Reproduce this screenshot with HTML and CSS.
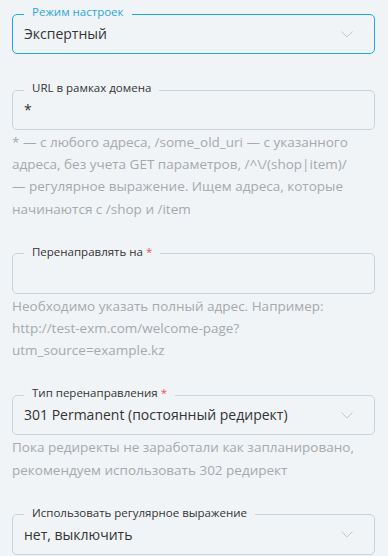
FILE: index.html
```html
<!DOCTYPE html>
<html lang="ru">
<head>
    <meta charset="UTF-8">
    <title>Редирект</title>
    <link rel="stylesheet" href="styles.css">
</head>
<body>
    <form class="redirect-form">
        <div class="group">
            <fieldset class="field field-active">
                <legend>Режим настроек</legend>
                <div class="select-row">
                    <span class="value">Экспертный</span>
                    <svg class="chevron" width="12" height="7" viewBox="0 0 12 7"><polyline points="0.5,0.5 6,6 11.5,0.5" fill="none" stroke="#c2c7cc" stroke-width="1"/></svg>
                </div>
            </fieldset>
        </div>

        <div class="group">
            <fieldset class="field">
                <legend>URL в рамках домена</legend>
                <div class="select-row">
                    <span class="value">*</span>
                </div>
            </fieldset>
            <p class="hint">* — с любого адреса, /some_old_uri — с указанного адреса, без учета GET параметров, /^\/(shop|item)/ — регулярное выражение. Ищем адреса, которые начинаются с /shop и /item</p>
        </div>

        <div class="group">
            <fieldset class="field">
                <legend>Перенаправлять на <span class="req">*</span></legend>
                <div class="select-row">
                    <span class="value"></span>
                </div>
            </fieldset>
            <p class="hint">Необходимо указать полный адрес. Например: http://test-exm.com/welcome-page?utm_source=example.kz</p>
        </div>

        <div class="group">
            <fieldset class="field">
                <legend>Тип перенаправления <span class="req">*</span></legend>
                <div class="select-row">
                    <span class="value">301 Permanent (постоянный редирект)</span>
                    <svg class="chevron" width="12" height="7" viewBox="0 0 12 7"><polyline points="0.5,0.5 6,6 11.5,0.5" fill="none" stroke="#c2c7cc" stroke-width="1"/></svg>
                </div>
            </fieldset>
            <p class="hint">Пока редиректы не заработали как запланировано, рекомендуем использовать 302 редирект</p>
        </div>

        <div class="group">
            <fieldset class="field">
                <legend>Использовать регулярное выражение</legend>
                <div class="select-row">
                    <span class="value">нет, выключить</span>
                    <svg class="chevron" width="12" height="7" viewBox="0 0 12 7"><polyline points="0.5,0.5 6,6 11.5,0.5" fill="none" stroke="#c2c7cc" stroke-width="1"/></svg>
                </div>
            </fieldset>
        </div>
    </form>
</body>
</html>
```

FILE: styles.css
```css
body { margin: 0; background: #f1f4f7; font-family: "Open Sans", "Noto Sans", sans-serif; color: #333; }
.redirect-form { padding: 5px 13px 0 12px; }
.group { margin-bottom: 25px; }
.group:first-child { margin-bottom: 27px; }
.group:last-child { margin-bottom: 0; }
.field { margin: 0; padding: 0 11px; border: 1px solid #c9d3dc; border-radius: 5px; min-width: 0; }
.field legend { margin-left: 0; padding: 0 8px 4px; font-size: 11.5px; line-height: 14px; color: #333; }
.field-active { border-color: #1eaadf; }
.field-active legend { color: #2ba6da; }
.req { color: #f0505e; }
.select-row { display: flex; align-items: center; justify-content: space-between; height: 22px; padding-bottom: 8px; }
.value { font-size: 14px; line-height: 22px; color: #333; }
.chevron { margin-right: 10px; }
.hint { margin: 1px 0 0; padding-right: 12px; font-size: 13.5px; line-height: 22.2px; color: #a6a9ac; }
```
